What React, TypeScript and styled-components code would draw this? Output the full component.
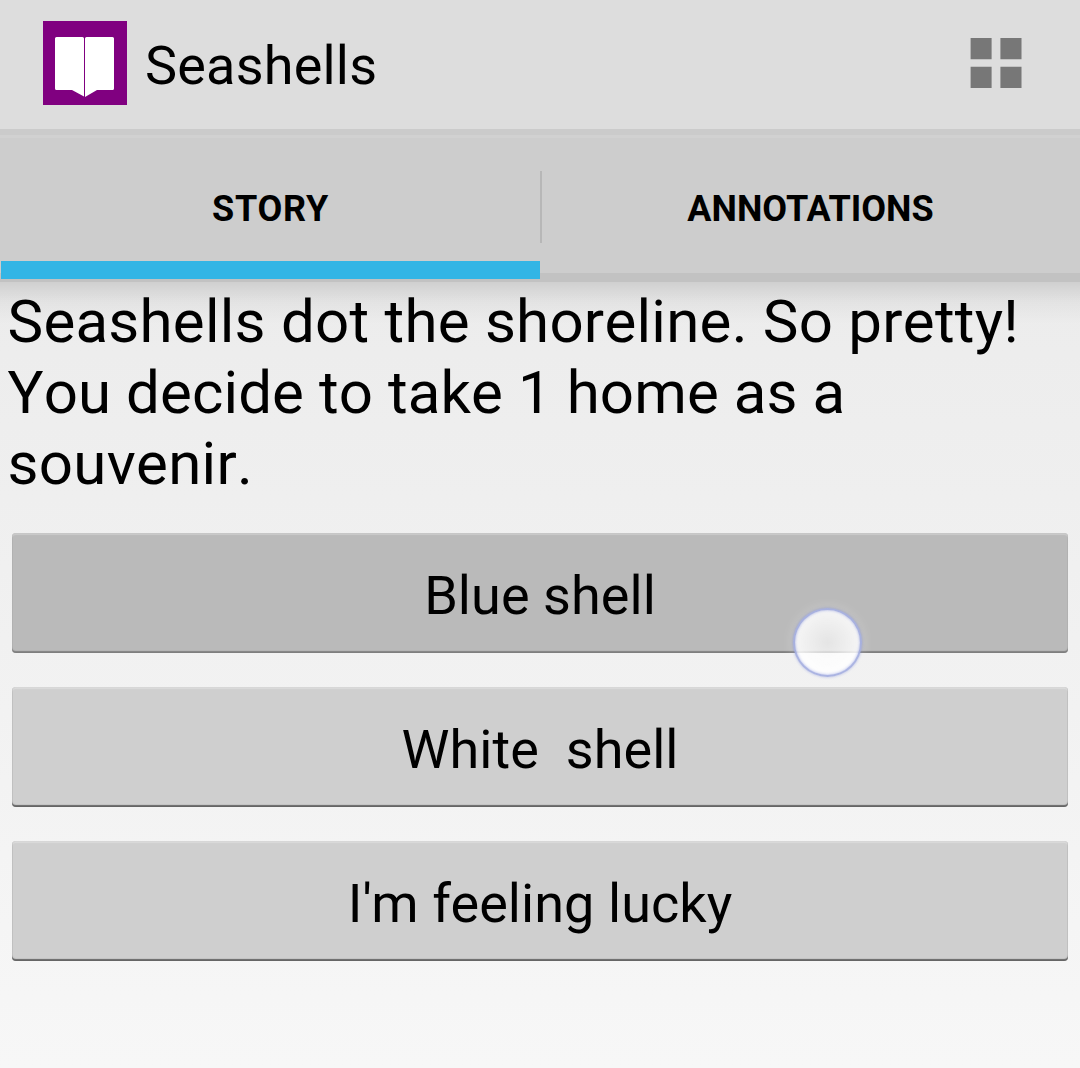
import React from "react";
import styled, { createGlobalStyle } from "styled-components";

const Global = createGlobalStyle`
  * { box-sizing: border-box; }
  body { margin: 0; font-family: Roboto, "Liberation Sans", sans-serif; color: #000; }
`;
const Screen = styled.div`
  position: relative;
  width: 1080px;
  height: 1068px;
  overflow: hidden;
  background: linear-gradient(#ececec 282px, #f7f7f7 1068px);
`;
const Bar = styled.header`
  height: 129px;
  display: flex;
  align-items: flex-start;
  background: #ddd;
  padding: 21px 58px 0 43px;
`;
const Title = styled.h1`
  margin: 12px 0 0 18px;
  flex: 1;
  font-size: 54px;
  line-height: 66px;
  font-weight: 400;
  letter-spacing: 0.2px;
`;
const Tabs = styled.nav`
  height: 153px;
  display: grid;
  grid-template-columns: 540px 2px 538px;
  background: linear-gradient(#cbcbcb 6px, #d1d1d1 6px 9px, #cdcdcd 9px 144px, #c2c2c2 144px);
`;
const Tab = styled.div<{ $active?: boolean }>`
  height: 150px;
  padding-top: 59px;
  text-align: center;
  font-size: 36px;
  line-height: 42px;
  font-weight: 700;
  margin-left: ${(p) => (p.$active ? 1 : -1)}px;
  border-bottom: ${(p) => (p.$active ? "18px solid #33b5e5" : "0")};
  letter-spacing: ${(p) => (p.$active ? 0.7 : 0)}px;
`;
const Divider = styled.i`
  height: 72px;
  margin-top: 42px;
  background: #b7b7b7;
`;
const Content = styled.main`
  background: linear-gradient(rgba(0, 0, 0, 0.12), rgba(0, 0, 0, 0.04) 20px, transparent 42px);
`;
const Story = styled.p`
  margin: 0;
  padding: 4px 7.5px 0;
  font-size: 60px;
  line-height: 71px;
  font-kerning: none;
`;
const Line = styled.span<{ $spacing: number }>`
  display: block;
  letter-spacing: ${(p) => p.$spacing}px;
`;
const Choices = styled.div`
  padding: 34px 12px;
  display: grid;
  gap: 34px;
`;
const Choice = styled.button<{ $pressed?: boolean }>`
  height: 120px;
  border: 0;
  border-radius: 4px;
  background: ${(p) => (p.$pressed ? "#bababa" : "#cfcfcf")};
  box-shadow: inset 0 2px 1px rgba(255, 255, 255, 0.25),
    inset 0 -2px 1px rgba(0, 0, 0, ${(p) => (p.$pressed ? 0.3 : 0.5)}),
    inset 0 0 1px rgba(0, 0, 0, 0.25);
  color: #000;
  font: 400 54px/120px Roboto, sans-serif;
  letter-spacing: 0.06px;
  white-space: pre;
  padding: 3px 0 0;
`;
const Touch = styled.div`
  position: absolute;
  left: 793px;
  top: 608px;
  width: 69px;
  height: 69px;
  border-radius: 50%;
  border: 2px solid rgba(126, 140, 210, 0.65);
  background: radial-gradient(rgba(255, 255, 255, 0.62), rgba(255, 255, 255, 0.85) 68%);
  box-shadow: 0 0 3px rgba(110, 125, 215, 0.5), 0 0 12px 2px rgba(255, 255, 255, 0.2),
    inset 0 0 3px rgba(110, 125, 215, 0.6);
`;
const GridSvg = styled.svg`
  margin-top: 17px;
`;

function BookIcon() {
  return (
    <svg width="84" height="84" viewBox="0 0 84 84">
      <rect width="84" height="84" fill="#800080" />
      <path
        d="M13.5 16H39.5Q41 16 41 17.5V75.6L29 69H13.5Q12 69 12 67.5V17.5Q12 16 13.5 16ZM43.5 16H69.5Q71 16 71 17.5V67.5Q71 69 69.5 69H54L42 75.9V17.5Q42 16 43.5 16Z"
        fill="#fff"
      />
    </svg>
  );
}

function GridIcon() {
  return (
    <GridSvg width="52" height="50" viewBox="0 0 52 50">
      <path
        d="M.6 0H21.6V21.2H.6ZM30.4 0H51.5V21.2H30.4ZM.6 28.8H21.6V50H.6ZM30.4 28.8H51.5V50H30.4Z"
        fill="#777"
      />
    </GridSvg>
  );
}

export default function App() {
  return (
    <Screen>
      <Global />
      <Bar>
        <BookIcon />
        <Title>Seashells</Title>
        <GridIcon />
      </Bar>
      <Tabs>
        <Tab $active>STORY</Tab>
        <Divider />
        <Tab>ANNOTATIONS</Tab>
      </Tabs>
      <Content>
        <Story>
          <Line $spacing={0.25}>Seashells dot the shoreline. So pretty!</Line>
          <Line $spacing={0.1}>You decide to take 1 home as a</Line>
          <Line $spacing={0.3}>souvenir.</Line>
        </Story>
        <Choices>
          <Choice $pressed>Blue shell</Choice>
          <Choice>White  shell</Choice>
          <Choice>I'm feeling lucky</Choice>
        </Choices>
      </Content>
      <Touch />
    </Screen>
  );
}
